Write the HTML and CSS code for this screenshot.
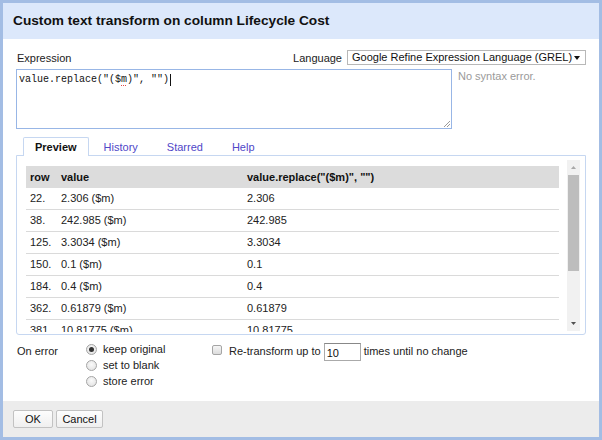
FILE: index.html
```html
<!DOCTYPE html>
<html>
<head>
<meta charset="utf-8">
<link rel="stylesheet" href="styles.css">
</head>
<body>
<div class="dialog">
  <div class="dialog-header">Custom text transform on column Lifecycle Cost</div>
  <div class="dialog-body">
    <div class="expr-head">
      <span class="label">Expression</span>
      <div class="lang">
        <span class="label">Language</span>
        <div class="select">
          <span>Google Refine Expression Language (GREL)</span>
          <svg class="select-arrow" width="6" height="4" viewBox="0 0 6 4"><path d="M0 0H6L3 4Z"/></svg>
        </div>
      </div>
    </div>
    <div class="expr-row">
      <div class="editor">value.replace("($<span class="misspelled">m</span>)", "")<span class="caret"></span><svg class="grip" width="7" height="7" viewBox="0 0 7 7"><path d="M7 1L1 7M7 4L4 7" stroke="#9a9a9a" stroke-width="1"/></svg></div>
      <div class="status">No syntax error.</div>
    </div>
    <div class="tabs">
      <div class="tab active">Preview</div>
      <div class="tab">History</div>
      <div class="tab">Starred</div>
      <div class="tab">Help</div>
    </div>
    <div class="panel">
      <div class="scroll">
        <table class="preview">
          <colgroup><col class="c-row"><col class="c-val"><col></colgroup>
          <thead>
            <tr><th>row</th><th>value</th><th>value.replace("($m)", "")</th></tr>
          </thead>
          <tbody>
            <tr><td>22.</td><td>2.306 ($m)</td><td>2.306</td></tr>
            <tr><td>38.</td><td>242.985 ($m)</td><td>242.985</td></tr>
            <tr><td>125.</td><td>3.3034 ($m)</td><td>3.3034</td></tr>
            <tr><td>150.</td><td>0.1 ($m)</td><td>0.1</td></tr>
            <tr><td>184.</td><td>0.4 ($m)</td><td>0.4</td></tr>
            <tr><td>362.</td><td>0.61879 ($m)</td><td>0.61879</td></tr>
            <tr><td>381.</td><td>10.81775 ($m)</td><td>10.81775</td></tr>
          </tbody>
        </table>
      </div>
      <div class="scrollbar">
        <div class="sb-btn"><svg width="5" height="3" viewBox="0 0 5 3"><path d="M0 3H5L2.5 0Z" fill="#a8a8a8"/></svg></div>
        <div class="sb-track"><div class="sb-thumb"></div></div>
        <div class="sb-btn"><svg width="5" height="3" viewBox="0 0 5 3"><path d="M0 0H5L2.5 3Z" fill="#505050"/></svg></div>
      </div>
    </div>
    <div class="options">
      <div class="opt-label">On error</div>
      <div class="radios">
        <div class="radio-row"><span class="radio checked"></span><span>keep original</span></div>
        <div class="radio-row"><span class="radio"></span><span>set to blank</span></div>
        <div class="radio-row"><span class="radio"></span><span>store error</span></div>
      </div>
      <div class="repeat">
        <span class="checkbox"></span>
        <span class="repeat-text">Re-transform up to</span>
        <input class="count" type="text" value="10">
        <span class="repeat-tail">times until no change</span>
      </div>
    </div>
  </div>
  <div class="dialog-footer">
    <button class="btn btn-ok">OK</button>
    <button class="btn btn-cancel">Cancel</button>
  </div>
</div>
</body>
</html>
```

FILE: styles.css
```css
* { box-sizing: border-box; }
html, body { margin: 0; padding: 0; background: #fff; }
body {
  font-family: "Liberation Sans", Arial, sans-serif;
  font-size: 11px;
  color: #222;
}
.dialog {
  width: 602px;
  height: 440px;
  border: 3px solid #a3bde4;
  display: flex;
  flex-direction: column;
  background: #fff;
}
.dialog-header {
  height: 36px;
  flex: none;
  background: #dce8fb;
  padding-left: 10px;
  font-size: 13.7px;
  font-weight: bold;
  color: #111;
  line-height: 36px;
}
.dialog-body {
  flex: 1;
  padding: 11px 13px 0 13px;
}
.expr-head {
  display: flex;
  justify-content: space-between;
  align-items: center;
  height: 15px;
}
.label { padding-left: 1px; }
.lang { display: flex; align-items: center; gap: 5px; }
.select {
  width: 239px;
  height: 15px;
  border: 1px solid #b8b8b8;
  display: flex;
  align-items: center;
  justify-content: space-between;
  padding: 0 5px 0 4px;
  line-height: 13px;
  color: #111;
}
.select-arrow { fill: #111; }
.expr-row {
  display: flex;
  align-items: flex-start;
  gap: 6px;
  margin-top: 4px;
}
.editor {
  position: relative;
  width: 436px;
  height: 60px;
  border: 1px solid #98b6e6;
  padding: 4px 2px;
  font-family: "Liberation Mono", "DejaVu Sans Mono", monospace;
  font-size: 10px;
  line-height: 12px;
  color: #111;
  white-space: pre;
}
.misspelled { position: relative; }
.misspelled::after {
  content: "";
  position: absolute;
  left: 0;
  right: 0;
  bottom: -1px;
  height: 1px;
  background: repeating-linear-gradient(90deg, #e04848 0 1px, #ffffff 1px 2px);
}
.caret {
  display: inline-block;
  width: 1px;
  height: 12px;
  background: #111;
  vertical-align: top;
  margin-left: 1px;
}
.grip { position: absolute; right: 1px; bottom: 1px; }
.status {
  color: #9a9a9a;
  padding-top: 1px;
}
.tabs {
  display: flex;
  gap: 1px;
  margin-top: 8px;
  padding-left: 7px;
  position: relative;
  z-index: 1;
}
.tab {
  height: 19px;
  line-height: 18px;
  padding: 0 13px;
  color: #5047c8;
  border: 1px solid transparent;
  border-bottom: none;
}
.tab.active {
  padding: 0 11px;
  border-color: #c6d7f1;
  background: #fff;
  color: #111;
  font-weight: bold;
  border-radius: 2px 2px 0 0;
}
.panel {
  margin-top: -1px;
  height: 180px;
  border: 1px solid #c6d7f1;
  border-radius: 0 0 3px 3px;
  padding: 4px 5px 3px 9px;
  display: flex;
  gap: 8px;
}
.scroll {
  flex: 1;
  height: 172px;
  overflow: hidden;
  padding-top: 6px;
}
.preview {
  width: 100%;
  border-collapse: separate;
  border-spacing: 0;
  table-layout: fixed;
}
.c-row { width: 31px; }
.c-val { width: 186px; }
.preview th {
  background: #dcdcdc;
  font-weight: bold;
  text-align: left;
  line-height: 22px;
  padding: 0 4px;
  color: #111;
  white-space: nowrap;
}
.preview td {
  line-height: 21px;
  padding: 0 4px;
  border-bottom: 1px solid #dadada;
  white-space: nowrap;
}
.scrollbar {
  width: 13px;
  height: 171px;
  display: flex;
  flex-direction: column;
  background: #f1f1f1;
}
.sb-btn {
  height: 15px;
  display: flex;
  align-items: center;
  justify-content: center;
}
.sb-track { flex: 1; }
.sb-thumb {
  height: 96px;
  margin: 0 1px;
  background: #bdbdbd;
}
.options {
  display: flex;
  align-items: flex-start;
  margin-top: 6px;
}
.opt-label {
  width: 70px;
  line-height: 16px;
  padding-top: 2px;
  padding-left: 1px;
}
.radios { width: 126px; }
.radio-row {
  display: flex;
  align-items: center;
  gap: 6px;
  height: 16px;
}
.radio {
  width: 11px;
  height: 11px;
  border-radius: 50%;
  border: 1px solid #a5a5a5;
  background: radial-gradient(circle at 50% 40%, #fafafa, #dedede);
  display: flex;
  align-items: center;
  justify-content: center;
}
.radio.checked::after {
  content: "";
  width: 5px;
  height: 5px;
  border-radius: 50%;
  background: #333;
}
.repeat {
  display: flex;
  align-items: center;
  height: 20px;
  margin-top: 1px;
  line-height: 14px;
}
.checkbox {
  width: 10px;
  height: 10px;
  border: 1px solid #a5a5a5;
  border-radius: 2px;
  background: linear-gradient(#f6f6f6, #dcdcdc);
  margin-right: 7px;
  margin-top: -4px;
}
.repeat-text { margin-right: 3px; margin-top: -3px; }
.repeat-tail { margin-left: 3px; margin-top: -3px; }
.count {
  width: 37px;
  height: 18px;
  border: 1px solid #aaa;
  border-top-color: #888;
  font-family: "Liberation Sans", Arial, sans-serif;
  font-size: 11px;
  padding: 2px 2px 0 2px;
  color: #111;
  margin: 0;
}
.dialog-footer {
  height: 36px;
  flex: none;
  background: #ececec;
  padding: 9px 10px 0;
  display: flex;
  align-items: flex-start;
  gap: 3px;
}
.btn {
  height: 18px;
  border: 1px solid #c2c2c2;
  border-radius: 2px;
  background: linear-gradient(#fdfdfd, #efefef);
  font-family: "Liberation Sans", Arial, sans-serif;
  font-size: 11px;
  color: #111;
  padding: 0;
  margin: 0;
}
.btn-ok { width: 40px; }
.btn-cancel { width: 47px; }
```
